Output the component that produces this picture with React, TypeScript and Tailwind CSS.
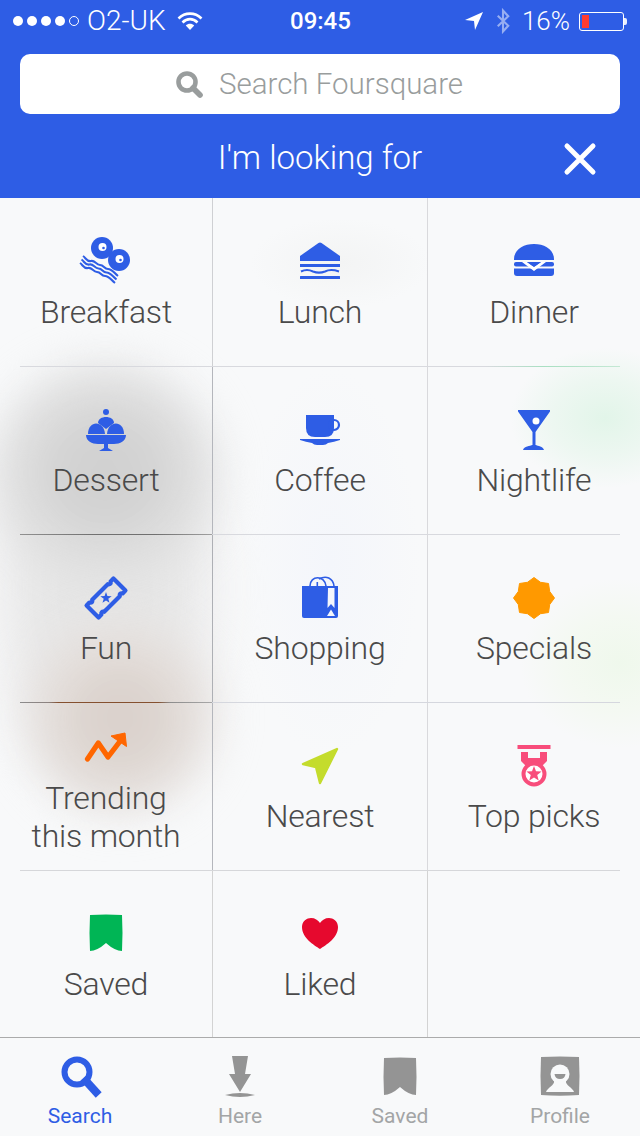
import React from "react";

const BLUE = "#2e5de5";

function Glyph({ children }: { children: React.ReactNode }) {
  return (
    <svg width="60" height="44" viewBox="-30 -22 60 44" className="overflow-visible block">
      {children}
    </svg>
  );
}

const starPoints = (cx: number, cy: number, r: number, inner: number, n = 5, rot = -90) =>
  Array.from({ length: n * 2 }, (_, i) => {
    const a = ((rot + (i * 180) / n) * Math.PI) / 180;
    const rad = i % 2 ? inner : r;
    return `${(cx + rad * Math.cos(a)).toFixed(2)},${(cy + rad * Math.sin(a)).toFixed(2)}`;
  }).join(" ");

const Breakfast = () => (
  <Glyph>
    <g fill={BLUE}>
      <circle cx="-4" cy="-13" r="11" />
      <circle cx="13" cy="-1" r="11" />
    </g>
    <circle cx="-3.5" cy="-14" r="4" fill="#fff" />
    <circle cx="13.5" cy="-2" r="4" fill="#fff" />
    <circle cx="-2.5" cy="-13" r="1.3" fill={BLUE} />
    <circle cx="14.5" cy="-1" r="1.3" fill={BLUE} />
    <g fill="none" stroke={BLUE} strokeWidth="2.1">
      <path d="M-23,-5 C-20,-3 -19,1 -15,0 C-11,-1 -10,4 -6,4 C-2,4 -2,8 2,8 C6,8 8,12 12,15" />
      <path d="M-24.5,-1.5 C-21.5,0.5 -20.5,4.5 -16.5,3.5 C-12.5,2.5 -11.5,7.5 -7.5,7.5 C-3.5,7.5 -3.5,11.5 0.5,11.5 C4.5,11.5 6.5,15.5 10.5,18.5" />
      <path d="M-26,2 C-23,4 -22,8 -18,7 C-14,6 -13,11 -9,11 C-5,11 -5,15 -1,15 C3,15 5,19 9,22" />
    </g>
  </Glyph>
);

const Lunch = () => (
  <Glyph>
    <path d="M-20,-5 L-1.5,-18 Q0,-19 1.5,-18 L20,-5 L20,0 L-20,0 Z" fill={BLUE} />
    <rect x="-20" y="3" width="40" height="3" fill={BLUE} />
    <path d="M-19,10.5 C-15,8.5 -11,8.5 -7,10.5 C-3,12 1,12 5,10.5 C9,8.5 13,8.5 19,10.5" fill="none" stroke={BLUE} strokeWidth="2" />
    <rect x="-20" y="15" width="40" height="3" rx="0.5" fill={BLUE} />
  </Glyph>
);

const Dinner = () => (
  <Glyph>
    <path d="M-20,-2 C-20,-11 -11,-17 0,-17 C11,-17 20,-11 20,-2 L20,-1 L-20,-1 Z" fill={BLUE} />
    <rect x="-20" y="1" width="40" height="4.5" rx="2" fill={BLUE} />
    <path d="M-20,7.5 L20,7.5 L20,12 Q20,15 17,15 L-17,15 Q-20,15 -20,12 Z" fill={BLUE} />
    <path d="M-12,1 L0,10 L12,1 L7,1 L0,6 L-7,1 Z" fill="#fff" />
    <path d="M-7,1 L0,6 L7,1 Z" fill={BLUE} />
  </Glyph>
);

const Dessert = () => (
  <Glyph>
    <g fill={BLUE}>
      <circle cx="0" cy="-18" r="3" />
      <path d="M-8,-7 C-8,-15 8,-15 8,-7 Q4,-4 0,-1 Q-4,-4 -8,-7 Z" />
      <path d="M-18,4 C-18,-10 -2,-10 -1,4 Z" />
      <path d="M18,4 C18,-10 2,-10 1,4 Z" />
      <path d="M-20,5 L20,5 C20,11 14,14 8,14 L2,14 L2,18 L7,21 L-7,21 L-2,18 L-2,14 L-8,14 C-14,14 -20,11 -20,5 Z" />
    </g>
  </Glyph>
);

const Coffee = () => (
  <Glyph>
    <path d="M-14,-15 L14,-15 L14,-2 Q14,7 5,7 L-5,7 Q-14,7 -14,-2 Z" fill={BLUE} />
    <circle cx="14" cy="-5" r="5" fill="none" stroke={BLUE} strokeWidth="2.2" />
    <path d="M-20,9 L20,9 L20,10 Q14,12 8,13 Q6,15 3,15 L-3,15 Q-6,15 -8,13 Q-14,12 -20,10 Z" fill={BLUE} />
  </Glyph>
);

const Nightlife = () => (
  <Glyph>
    <path d="M-16,-20 L16,-20 L16,-18.5 L1.5,2 L1.5,15 C4,16 9,16 10,20 L-11,20 C-10,16 -4,16 -1.5,15 L-1.5,2 L-16,-18.5 Z" fill={BLUE} />
    <circle cx="2" cy="-9" r="3.5" fill="#fff" />
  </Glyph>
);

const Fun = () => (
  <Glyph>
    <g transform="rotate(-45)">
      <path
        d="M-19,-8.5 L-15,-8.5 Q-13,-5.5 -11,-8.5 L11,-8.5 Q13,-5.5 15,-8.5 L19,-8.5 L19,8.5 L15,8.5 Q13,5.5 11,8.5 L-11,8.5 Q-13,5.5 -15,8.5 L-19,8.5 Z"
        fill="none"
        stroke={BLUE}
        strokeWidth="4.2"
        strokeLinejoin="round"
      />
      <polygon points={starPoints(0, 0, 6, 2.4, 5, -45)} fill={BLUE} />
    </g>
  </Glyph>
);

const Shopping = () => (
  <Glyph>
    <path d="M-18,-12 L6,-12 L6,20 L-16,20 Q-18,20 -18,18 Z" fill={BLUE} />
    <path d="M6,-12 L18,-12 L18,18 Q18,20 16,20 L6,20 Z" fill={BLUE} />
    <path d="M8,-10 L14.5,-10 L14.5,10 L11,6 L7.5,10 Z" fill="#f4f6fc" />
    <path d="M7,18 L11,11.5 L15,18 Z" fill="#f4f6fc" />
    <path d="M-10,-12 C-10,-23 5,-23 6,-12" fill="none" stroke={BLUE} strokeWidth="1.6" />
    <path d="M-1,-19 C6,-23 13,-20 14,-12" fill="none" stroke={BLUE} strokeWidth="1.6" />
    <rect x="-3.5" y="-16" width="1.6" height="5" fill={BLUE} />
  </Glyph>
);

const Specials = () => (
  <Glyph>
    <polygon points={starPoints(0, 0, 20.5, 17, 8)} fill="#ff9900" stroke="#ff9900" strokeWidth="1" strokeLinejoin="round" />
  </Glyph>
);

const Trending = () => (
  <Glyph>
    <path d="M-18.5,11 L-7.7,-5 L2,9 L15,-8" fill="none" stroke="#ff6600" strokeWidth="5.2" strokeLinecap="round" strokeLinejoin="round" />
    <path d="M5,-12 L19,-15 L20.5,-1.5 Z" fill="#ff6600" stroke="#ff6600" strokeWidth="1" strokeLinejoin="round" />
  </Glyph>
);

const Nearest = () => (
  <Glyph>
    <path d="M17,-17 L-17,-2 L-4,1 L0,17 Z" fill="#c4dc2c" stroke="#c4dc2c" strokeWidth="2.4" strokeLinejoin="round" />
  </Glyph>
);

const TopPicks = () => (
  <Glyph>
    <g fill="#f84d7b">
      <rect x="-16.5" y="-21" width="33" height="4" />
      <path d="M-13,-14 L-6,-14 L-6,-8 L6,-8 L6,-14 L13,-14 L13,-5 L7,1 L-7,1 L-13,-5 Z" />
    </g>
    <circle cx="0" cy="8" r="10.5" fill="#fff" stroke="#f84d7b" strokeWidth="4" />
    <polygon points={starPoints(0, 8, 8, 3.4)} fill="#f84d7b" />
  </Glyph>
);

const SavedIcon = () => (
  <Glyph>
    <path d="M-16,-18 Q0,-19 16,-18 Q17,0 16,18 Q9,18 0,10 Q-9,18 -16,18 Q-17,0 -16,-18 Z" fill="#00b555" />
  </Glyph>
);

const Liked = () => (
  <Glyph>
    <path d="M0,16 C-6,12 -18,5 -18,-6 C-18,-12 -13,-15 -9,-15 C-5,-15 -2,-13 0,-10 C2,-13 5,-15 9,-15 C13,-15 18,-12 18,-6 C18,5 6,12 0,16 Z" fill="#e6092e" />
  </Glyph>
);

type Cell = { label?: React.ReactNode; icon?: React.ReactNode; right?: string; line?: string; inner?: string };

const rows: { h: string; inner: string; cells: Cell[] }[] = [
  {
    h: "h-[169px] border-b border-[#d8d9de]",
    inner: "pt-[6px] gap-[10px]",
    cells: [
      { label: "Breakfast", icon: <Breakfast />, right: "border-r border-[#cfd0d3]" },
      { label: "Lunch", icon: <Lunch />, right: "border-r border-[#d9d9dc]" },
      {
        label: "Dinner",
        icon: <Dinner />,
        line: "bg-[linear-gradient(90deg,#d8d9de_30%,#a9dfc2_60%,#c4e8d4_100%)]",
      },
    ],
  },
  {
    h: "h-[168px] border-b border-[#d8d9de]",
    inner: "pt-[5px] gap-[9px]",
    cells: [
      {
        label: "Dessert",
        icon: <Dessert />,
        right: "border-r border-[#b4b6bc]",
        line: "bg-[linear-gradient(90deg,#909090_0%,#707070_40%,#707070_70%,#a0a0a0_100%)]",
      },
      { label: "Coffee", icon: <Coffee />, right: "border-r border-[#d9d9dc]" },
      { label: "Nightlife", icon: <Nightlife /> },
    ],
  },
  {
    h: "h-[168px] border-b border-[#d5d7de]",
    inner: "pt-[5px] gap-[9px]",
    cells: [
      {
        label: "Fun",
        icon: <Fun />,
        right: "border-r border-[#aeb0b5]",
        line: "bg-[linear-gradient(90deg,#8c8c8c_0%,#8c8280_15%,#85502f_20%,#85502f_72%,#8c8c8c_78%,#a8a8a8_100%)]",
      },
      { label: "Shopping", icon: <Shopping />, right: "border-r border-[#d9d9dc]" },
      { label: "Specials", icon: <Specials /> },
    ],
  },
  {
    h: "h-[168px] border-b border-[#d6d7da]",
    inner: "pt-[5px] gap-[9px]",
    cells: [
      {
        label: (
          <>
            Trending
            <br />
            this month
          </>
        ),
        icon: <Trending />,
        right: "border-r border-[#b4b6bc]",
        inner: "pt-[7px] gap-[9px]",
      },
      { label: "Nearest", icon: <Nearest />, right: "border-r border-[#d9d9dc]" },
      { label: "Top picks", icon: <TopPicks /> },
    ],
  },
  {
    h: "h-[166px]",
    inner: "pt-[6px] gap-[10px]",
    cells: [
      { label: "Saved", icon: <SavedIcon />, right: "border-r border-[#d3d3d3]" },
      { label: "Liked", icon: <Liked />, right: "border-r border-[#d3d3d3]" },
      {},
    ],
  },
];

const GridCell = ({ c, w, inner }: { c: Cell; w: string; inner: string }) => (
  <div className={`${w} ${c.right ?? ""} ${c.inner ?? inner} relative h-full flex flex-col items-center justify-center`}>
    {c.icon}
    {c.label && (
      <div className="text-[32px] leading-[38px] font-light text-center text-[#4a4a4a] tracking-[-0.2px]">{c.label}</div>
    )}
    {c.line && <span className={`absolute left-0 right-0 bottom-[-1px] h-px ${c.line}`} />}
  </div>
);

const Tab = ({ label, active, children }: { label: string; active?: boolean; children: React.ReactNode }) => (
  <div className="flex flex-col items-center pt-[18px]">
    <svg width="60" height="42" viewBox="-30 -21 60 42" className="overflow-visible block">
      {children}
    </svg>
    <div className={`text-[21px] leading-[24px] mt-[6px] ${active ? "text-[#2e5de5]" : "text-[#a3a5a6]"}`}>{label}</div>
  </div>
);

export default function App() {
  return (
    <div className="w-[640px] h-[1136px] overflow-hidden flex flex-col bg-[#f8f9fa] font-['Roboto','Liberation_Sans',sans-serif]">
      <header className="relative z-10 h-[198px] shrink-0 bg-[#2e5de5] text-white flex flex-col">
        <div className="h-[40px] px-[13px] pt-[2px] flex items-center justify-between relative font-light text-[28px]">
          <div className="flex items-center">
            <div className="flex gap-[4px]">
              <span className="w-[10px] h-[10px] rounded-full bg-white" />
              <span className="w-[10px] h-[10px] rounded-full bg-white" />
              <span className="w-[10px] h-[10px] rounded-full bg-white" />
              <span className="w-[10px] h-[10px] rounded-full bg-white" />
              <span className="w-[10px] h-[10px] rounded-full border border-white" />
            </div>
            <span className="ml-[8px] leading-none">O2-UK</span>
            <svg width="26" height="20" viewBox="0 0 26 20" className="ml-[11px]">
              <g fill="none" stroke="#fff" strokeWidth="2.6">
                <path d="M1.5,7.5 C8,1 18,1 24.5,7.5" />
                <path d="M5.5,11.5 C10,7 16,7 20.5,11.5" />
              </g>
              <path d="M8.8,14.5 C11,12 15,12 17.2,14.5 L13,19 Z" fill="#fff" />
            </svg>
          </div>
          <span className="absolute left-[290px] top-[5px] text-[24px] leading-[32px] font-medium">09:45</span>
          <div className="flex items-center pr-[3px]">
            <svg width="18" height="18" viewBox="0 0 18 18">
              <path d="M18,0 L0,8 L9,9 L10,18 Z" fill="#fff" />
            </svg>
            <svg width="14" height="26" viewBox="0 0 16 26" className="ml-[13px] opacity-50">
              <path d="M2,7 L14,18.5 L8,25 L8,1 L14,7.5 L2,19" fill="none" stroke="#fff" strokeWidth="2.4" />
            </svg>
            <span className="ml-[12px] leading-none text-[26px]">16%</span>
            <div className="ml-[9px] w-[45px] h-[19px] border border-white rounded-[3px] p-[2px] relative">
              <div className="w-[7px] h-full bg-[#ff3b30]" />
              <span className="absolute right-[-4px] top-[5px] w-[3px] h-[7px] bg-white rounded-r-[2px] opacity-90" />
            </div>
          </div>
        </div>
        <div className="mt-[14px] mx-[20px] h-[60px] bg-white rounded-[10px] flex items-center justify-center gap-[16px] pr-[1px]">
          <svg width="27" height="27" viewBox="0 0 27 27">
            <circle cx="11" cy="11" r="8.5" fill="none" stroke="#999d9d" strokeWidth="4.6" />
            <path d="M17,17 L24,24" stroke="#999d9d" strokeWidth="5.6" strokeLinecap="round" />
          </svg>
          <span className="text-[29.5px] leading-[34px] font-light text-[#999d9d]">Search Foursquare</span>
        </div>
        <div className="relative flex-1 flex items-center justify-center pt-[4px]">
          <span className="text-[33px] leading-[38px] font-light">I'm looking for</span>
          <svg width="34" height="34" viewBox="0 0 34 34" className="absolute right-[43px] top-[28px]">
            <path d="M4,4 L30,30 M30,4 L4,30" stroke="#fff" strokeWidth="5" strokeLinecap="round" />
          </svg>
        </div>
      </header>

      <main className="relative h-[839px] shrink-0 overflow-hidden px-[20px]">
        {/* blurred content showing through the translucent sheet */}
        <div className="absolute left-[-25px] top-[170px] w-[260px] h-[440px] blur-[18px] bg-[radial-gradient(closest-side,#e6e6e6_0%,#e8e8e8_55%,#f1f1f2_85%,#f8f9fa00_100%)]" />
        <div className="absolute left-[-25px] top-[150px] w-[260px] h-[250px] blur-[18px] bg-[radial-gradient(closest-side,#cfcfcf_0%,#d4d4d4_40%,#dfdfdf_70%,#f8f9fa00_100%)]" />
        <div className="absolute left-[10px] top-[410px] w-[220px] h-[220px] blur-[18px] bg-[radial-gradient(closest-side,#d9cfca_0%,#ddd5d0_40%,#e5e0dd_70%,#f8f9fa00_100%)]" />
        <div className="absolute left-[510px] top-[150px] w-[190px] h-[140px] bg-[radial-gradient(closest-side,#e2f5e9_0%,#edf7f1_55%,#f8f9fa00_100%)]" />
        <div className="absolute left-[520px] top-[380px] w-[200px] h-[170px] bg-[radial-gradient(closest-side,#eff8ec_0%,#f4f9f2_55%,#f8f9fa00_100%)]" />
        <div className="absolute left-[240px] top-[170px] w-[180px] h-[390px] bg-[radial-gradient(closest-side,#f4f6fb_0%,#f8f9fa00_100%)]" />
        <div className="absolute left-[250px] top-[20px] w-[180px] h-[90px] bg-[radial-gradient(closest-side,#f3f4f4_0%,#f8f9fa00_100%)]" />

        <div className="relative flex flex-col">
          {rows.map((r, i) => (
            <div key={i} className={`${r.h} flex`}>
              <GridCell c={r.cells[0]} w="w-[193px] pr-[20px]" inner={r.inner} />
              <GridCell c={r.cells[1]} w="w-[215px]" inner={r.inner} />
              <GridCell c={r.cells[2]} w="w-[192px] pl-[20px]" inner={r.inner} />
            </div>
          ))}
        </div>
      </main>

      <nav className="relative flex-1 border-t border-[#ababab] bg-[#f8f9fa] grid grid-cols-4 font-normal">
        <Tab label="Search" active>
          <circle cx="-3" cy="-5" r="12.5" fill="none" stroke={BLUE} strokeWidth="6" />
          <path d="M6,4 L16,15" stroke={BLUE} strokeWidth="8" strokeLinecap="square" />
        </Tab>
        <Tab label="Here">
          <path d="M-8,-21 L8,-21 L5,-3 L11,-3 L0,15 L-11,-3 L-5,-3 Z" fill="#949494" strokeLinejoin="round" />
          <path d="M-15,18 Q0,14 15,18 Q0,22 -15,18 Z" fill="#949494" />
        </Tab>
        <Tab label="Saved">
          <path d="M-16,-19 Q0,-20 16,-19 Q17,0 16,18 Q9,18 0,10 Q-9,18 -16,18 Q-17,0 -16,-19 Z" fill="#949494" />
        </Tab>
        <Tab label="Profile">
          <path d="M-19,-20 Q0,-21 19,-20 Q20,-1 19,18 Q0,19.5 -19,18 Q-20,-1 -19,-20 Z" fill="#949494" />
          <circle cx="0" cy="-3" r="9.5" fill="#f8f9fa" />
          <path d="M-5.5,-3 L5.5,-3 Q5,2 0,2 Q-5,2 -5.5,-3 Z" fill="#949494" />
          <path d="M-6,4 C-5,8 -13,11 -14,15 L14,15 C13,11 5,8 6,4 Z" fill="#f8f9fa" />
        </Tab>
      </nav>
    </div>
  );
}
